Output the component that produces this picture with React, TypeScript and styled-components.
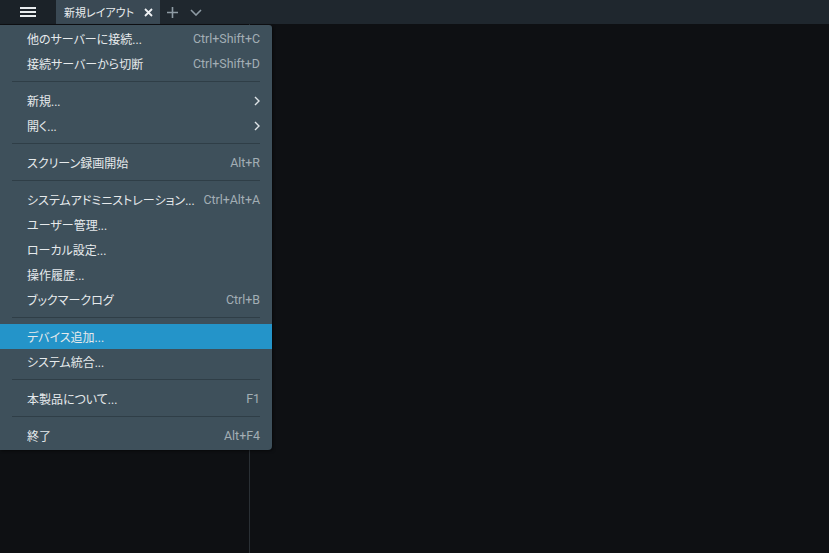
import styled, { createGlobalStyle } from "styled-components";

const Global = createGlobalStyle`
	html, body {
		margin: 0;
		padding: 0;
		background: #0e1013;
		font-family: "Roboto", "Noto Sans CJK JP", sans-serif;
		font-feature-settings: "palt";
		overflow: hidden;
	}
`;

const Page = styled.div`
	width: 829px;
	height: 553px;
	display: flex;
	flex-direction: column;
	position: relative;
	background: #0e1013;
`;

const TopBar = styled.header`
	height: 24px;
	display: flex;
	align-items: stretch;
	background: #1f272e;
	flex-shrink: 0;
`;

const MenuButton = styled.div<{ $open?: boolean }>`
	width: 56px;
	display: flex;
	align-items: center;
	justify-content: center;
	background: ${(p) => (p.$open ? "#1b2228" : "transparent")};
`;

const Tab = styled.div`
	width: 104px;
	display: flex;
	align-items: center;
	justify-content: space-between;
	padding: 0 7px 0 8px;
	box-sizing: border-box;
	background: #3a4954;
	color: #e8ecee;
	font-size: 11px;
	white-space: nowrap;
`;

const IconSlot = styled.div`
	width: 24px;
	display: flex;
	align-items: center;
	justify-content: center;
`;

const Body = styled.div`
	flex: 1;
	display: flex;
`;

const SidePanel = styled.aside`
	width: 249px;
	border-right: 1px solid #2a3035;
`;

const Menu = styled.nav`
	position: absolute;
	left: 0;
	top: 25px;
	width: 272px;
	padding: 1px 0 2px;
	box-sizing: border-box;
	background: #3e505b;
	border-radius: 0 3px 4px 0;
	box-shadow: 1px 1px 3px rgba(0, 0, 0, 0.5);
	font-size: 12px;
`;

const Item = styled.div<{ $active?: boolean }>`
	height: 25px;
	display: flex;
	align-items: center;
	justify-content: space-between;
	padding: 0 12px 0 27px;
	background: ${(p) => (p.$active ? "#2494c9" : "transparent")};
	color: #e6eaec;
	white-space: nowrap;
`;

const Shortcut = styled.span`
	color: #a3aeb5;
	font-size: 12.4px;
`;

const Sep = styled.div`
	height: 1px;
	margin: 5px 12px 6px;
	background: #2f3e47;
`;

const Arrow = () => (
	<svg width="6" height="10" viewBox="0 0 6 10">
		<path d="M1 1l4 4-4 4" stroke="#dfe4e7" strokeWidth="1.4" fill="none" />
	</svg>
);

type Entry = { label: string; key?: string; sub?: boolean; active?: boolean } | "sep";

const entries: Entry[] = [
	{ label: "他のサーバーに接続...", key: "Ctrl+Shift+C" },
	{ label: "接続サーバーから切断", key: "Ctrl+Shift+D" },
	"sep",
	{ label: "新規...", sub: true },
	{ label: "開く...", sub: true },
	"sep",
	{ label: "スクリーン録画開始", key: "Alt+R" },
	"sep",
	{ label: "システムアドミニストレーション...", key: "Ctrl+Alt+A" },
	{ label: "ユーザー管理..." },
	{ label: "ローカル設定..." },
	{ label: "操作履歴..." },
	{ label: "ブックマークログ", key: "Ctrl+B" },
	"sep",
	{ label: "デバイス追加...", active: true },
	{ label: "システム統合..." },
	"sep",
	{ label: "本製品について...", key: "F1" },
	"sep",
	{ label: "終了", key: "Alt+F4" },
];

const App = () => (
	<Page>
		<Global />
		<TopBar>
			<MenuButton $open>
				<svg width="16" height="12" viewBox="0 0 16 12">
					<rect x="0" y="1" width="16" height="2" fill="#e8ecee" />
					<rect x="0" y="5" width="16" height="2" fill="#e8ecee" />
					<rect x="0" y="9" width="16" height="2" fill="#e8ecee" />
				</svg>
			</MenuButton>
			<Tab>
				<span>新規レイアウト</span>
				<svg width="9" height="9" viewBox="0 0 9 9">
					<path d="M1 1l7 7M8 1l-7 7" stroke="#eef1f3" strokeWidth="1.8" />
				</svg>
			</Tab>
			<IconSlot>
				<svg width="11" height="11" viewBox="0 0 11 11">
					<path d="M5.5 0v11M0 5.5h11" stroke="#8e9ba4" strokeWidth="1.6" />
				</svg>
			</IconSlot>
			<IconSlot>
				<svg width="12" height="7" viewBox="0 0 12 7">
					<path d="M1 1l5 5 5-5" stroke="#8e9ba4" strokeWidth="1.6" fill="none" />
				</svg>
			</IconSlot>
		</TopBar>
		<Body>
			<SidePanel />
		</Body>
		<Menu>
			{entries.map((e, i) =>
				e === "sep" ? (
					<Sep key={i} />
				) : (
					<Item key={i} $active={e.active}>
						<span>{e.label}</span>
						{e.key && <Shortcut>{e.key}</Shortcut>}
						{e.sub && <Arrow />}
					</Item>
				)
			)}
		</Menu>
	</Page>
);

export default App;
